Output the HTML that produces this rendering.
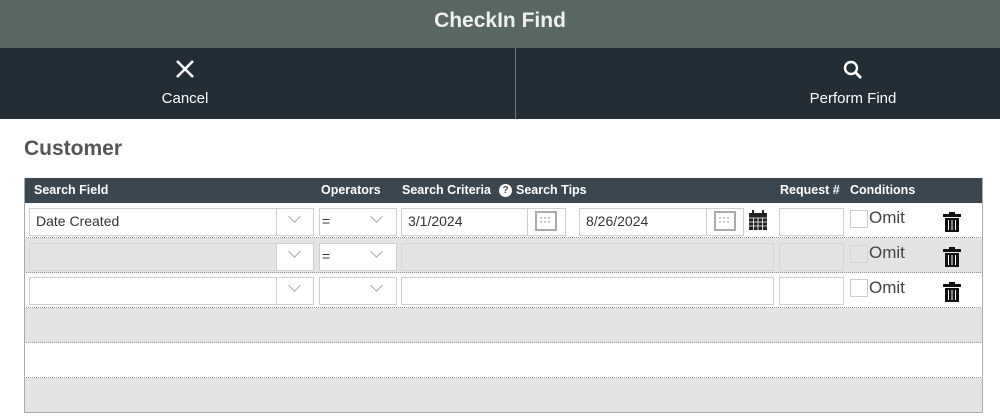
<!DOCTYPE html><html><head><style>
*{box-sizing:border-box;margin:0;padding:0}
body{width:1000px;height:419px;background:#fff;font-family:"Liberation Sans",sans-serif;position:relative;overflow:hidden}
.a{position:absolute}
.top{left:0;top:0;width:1000px;height:48px;background:#586664;color:#eef0ef;font-weight:bold;font-size:21px;text-align:center;line-height:42px}
.tb{left:0;top:48px;width:1000px;height:71px;background:#222d35;color:#fff;font-size:15px}
.in{position:absolute;border:1px solid #cfcfcf;background:#fff;font-size:14px;color:#333;line-height:25px;padding-left:6px}
.g{background:#e4e4e4;border-color:#d6d6d6}
.row{position:absolute;left:24px;width:959px;height:35px;border-bottom:1px dotted #999}
.chev{position:absolute;width:9px;height:9px;border-right:1px solid #aaa;border-bottom:1px solid #aaa;transform:rotate(45deg)}
.omit{position:absolute;font-size:17px;color:#444}
.cb{position:absolute;width:18px;height:18px;border:1px solid #ccc;background:#fff}
</style></head><body>
<div class="a top">CheckIn Find</div>
<div class="a tb">
 <div class="a" style="left:515px;top:0;width:1px;height:71px;background:#777"></div>
 <svg class="a" style="left:175px;top:11px" width="20" height="20"><path d="M2 2L18 18M18 2L2 18" stroke="#fff" stroke-width="2.6"/></svg>
 <div class="a" style="left:0;width:370px;top:42px;text-align:center">Cancel</div>
 <svg class="a" style="left:843px;top:12px" width="20" height="20"><circle cx="8" cy="8" r="6" fill="none" stroke="#fff" stroke-width="2.4"/><path d="M12 12L18 18" stroke="#fff" stroke-width="2.8"/></svg>
 <div class="a" style="left:706px;width:294px;top:42px;text-align:center">Perform Find</div>
</div>
<div class="a" style="left:24px;top:137px;font-size:21px;font-weight:bold;color:#555">Customer</div>
<div class="a" style="left:24px;top:178px;width:959px;height:25px;background:#3a4650;color:#fff;font-size:12.5px;font-weight:bold;line-height:25px">
 <span class="a" style="left:10px">Search Field</span>
 <span class="a" style="left:297px">Operators</span>
 <span class="a" style="left:378px">Search Criteria</span>
 <span class="a" style="left:475px;top:6px;width:13px;height:13px;border-radius:50%;background:#fff;color:#3a4650;font-size:10px;line-height:13px;text-align:center">?</span>
 <span class="a" style="left:492px">Search Tips</span>
 <span class="a" style="left:756px">Request #</span>
 <span class="a" style="left:826px">Conditions</span>
</div>
<div class="row" style="top:203px;background:#fff"></div>
<div class="row" style="top:238px;background:#e4e4e4"></div>
<div class="row" style="top:273px;background:#fff"></div>
<div class="row" style="top:308px;background:#e4e4e4"></div>
<div class="row" style="top:343px;background:#fff"></div>
<div class="a" style="left:24px;top:378px;width:959px;height:35px;background:#e4e4e4"></div>
<div class="a" style="left:24px;top:178px;width:959px;height:235px;border:1px solid #aaa;border-top:none"></div>

<!-- row1 -->
<div class="in" style="left:29px;top:208px;width:248px;height:28px">Date Created</div>
<div class="in" style="left:276px;top:208px;width:38px;height:28px"></div>
<div class="in" style="left:319px;top:208px;width:78px;height:28px;padding-left:2px">=</div>
<div class="in" style="left:401px;top:208px;width:127px;height:28px">3/1/2024</div>
<div class="in" style="left:527px;top:208px;width:39px;height:28px"></div>
<div class="in" style="left:579px;top:208px;width:128px;height:28px">8/26/2024</div>
<div class="in" style="left:706px;top:208px;width:38px;height:28px"></div>
<div class="in" style="left:779px;top:208px;width:65px;height:28px"></div>
<!-- row2 -->
<div class="in g" style="left:29px;top:243px;width:248px;height:28px"></div>
<div class="in" style="left:276px;top:243px;width:38px;height:28px"></div>
<div class="in" style="left:319px;top:243px;width:78px;height:28px;padding-left:2px">=</div>
<div class="in g" style="left:401px;top:243px;width:373px;height:28px"></div>
<div class="in g" style="left:779px;top:243px;width:65px;height:28px"></div>
<!-- row3 -->
<div class="in" style="left:29px;top:277px;width:248px;height:28px"></div>
<div class="in" style="left:276px;top:277px;width:38px;height:28px"></div>
<div class="in" style="left:319px;top:277px;width:78px;height:28px"></div>
<div class="in" style="left:401px;top:277px;width:373px;height:28px"></div>
<div class="in" style="left:779px;top:277px;width:65px;height:28px"></div>

<div class="chev" style="left:290px;top:212px"></div><div class="chev" style="left:372px;top:212px"></div>
<div class="chev" style="left:290px;top:247px"></div><div class="chev" style="left:372px;top:247px"></div>
<div class="chev" style="left:290px;top:281px"></div><div class="chev" style="left:372px;top:281px"></div>

<svg class="a" style="left:535px;top:211px" width="22" height="20"><rect x="1" y="1" width="20" height="18" fill="#fff" stroke="#aaa" stroke-width="2"/><g fill="#bbb"><rect x="5" y="6" width="2" height="1.5"/><rect x="9" y="6" width="2" height="1.5"/><rect x="13" y="6" width="2" height="1.5"/><rect x="5" y="10" width="2" height="1.5"/><rect x="9" y="10" width="2" height="1.5"/><rect x="13" y="10" width="2" height="1.5"/></g></svg>
<svg class="a" style="left:714px;top:211px" width="22" height="20"><rect x="1" y="1" width="20" height="18" fill="#fff" stroke="#aaa" stroke-width="2"/><g fill="#bbb"><rect x="5" y="6" width="2" height="1.5"/><rect x="9" y="6" width="2" height="1.5"/><rect x="13" y="6" width="2" height="1.5"/><rect x="5" y="10" width="2" height="1.5"/><rect x="9" y="10" width="2" height="1.5"/><rect x="13" y="10" width="2" height="1.5"/></g></svg>
<svg class="a" style="left:748px;top:210px" width="20" height="21"><rect x="1" y="3" width="18" height="17" fill="#222"/><rect x="4" y="0" width="2" height="5" fill="#222"/><rect x="14" y="0" width="2" height="5" fill="#222"/><g stroke="#fff" stroke-width="0.8"><path d="M1 8H19M1 12H19M1 16H19M5.5 8V20M10 8V20M14.5 8V20"/></g></svg>

<div class="cb" style="left:850px;top:210px"></div><div class="omit" style="left:869px;top:208px">Omit</div>
<div class="cb" style="left:850px;top:245px;background:#e4e4e4;border-color:#d6d6d6"></div><div class="omit" style="left:869px;top:243px">Omit</div>
<div class="cb" style="left:850px;top:279px"></div><div class="omit" style="left:869px;top:278px">Omit</div>

<svg class="a" style="left:942px;top:211px" width="20" height="22"><path d="M7 1H13V3H19V6H1V3H7Z" fill="#111"/><rect x="3" y="7" width="14" height="14" fill="#111"/><g stroke="#fff" stroke-width="1"><path d="M6.5 9V19M10 9V19M13.5 9V19"/></g></svg>
<svg class="a" style="left:942px;top:246px" width="20" height="22"><path d="M7 1H13V3H19V6H1V3H7Z" fill="#111"/><rect x="3" y="7" width="14" height="14" fill="#111"/><g stroke="#fff" stroke-width="1"><path d="M6.5 9V19M10 9V19M13.5 9V19"/></g></svg>
<svg class="a" style="left:942px;top:281px" width="20" height="22"><path d="M7 1H13V3H19V6H1V3H7Z" fill="#111"/><rect x="3" y="7" width="14" height="14" fill="#111"/><g stroke="#fff" stroke-width="1"><path d="M6.5 9V19M10 9V19M13.5 9V19"/></g></svg>
</body></html>
